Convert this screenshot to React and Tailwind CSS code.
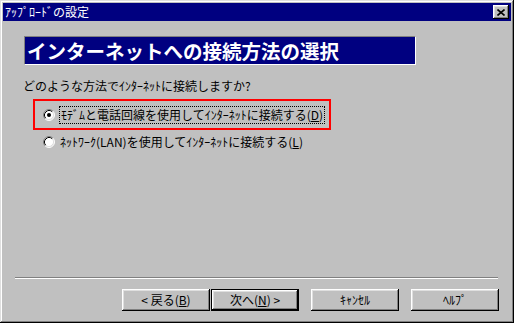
import React from 'react';

const font = { fontFamily: '"Noto Sans CJK JP", "Noto Sans", sans-serif' };

function Radio({ checked }) {
  return (
    <svg width="12" height="12" viewBox="0 0 12 12" className="shrink-0">
      <circle cx="6" cy="6" r="5" fill="#fff" />
      <path d="M2.11 9.89 A5.5 5.5 0 0 1 9.89 2.11" stroke="#808080" fill="none" />
      <path d="M9.89 2.11 A5.5 5.5 0 0 1 2.11 9.89" stroke="#fff" fill="none" />
      <path d="M2.82 9.18 A4.5 4.5 0 0 1 9.18 2.82" stroke="#000" fill="none" />
      <path d="M9.18 2.82 A4.5 4.5 0 0 1 2.82 9.18" stroke="#dfdfdf" fill="none" />
      {checked && <circle cx="6" cy="6" r="2" fill="#000" />}
    </svg>
  );
}

function Button({ children, isDefault }) {
  return (
    <button
      className={
        isDefault
          ? 'w-[88px] h-[22px] bg-[#c0c0c0] text-[12px] leading-4 text-black border border-black shadow-[inset_-1px_-1px_#000,inset_1px_1px_#fff,inset_-2px_-2px_#808080,inset_2px_2px_#dfdfdf] flex items-center justify-center'
          : 'w-[88px] h-[22px] bg-[#c0c0c0] text-[12px] leading-4 text-black shadow-[inset_-1px_-1px_#000,inset_1px_1px_#fff,inset_-2px_-2px_#808080,inset_2px_2px_#dfdfdf] flex items-center justify-center'
      }
    >
      {children}
    </button>
  );
}

export default function App() {
  return (
    <div
      className="w-[514px] h-[323px] bg-[#c0c0c0] p-[3px] flex flex-col shadow-[inset_-1px_-1px_#000,inset_1px_1px_#dfdfdf,inset_-2px_-2px_#808080,inset_2px_2px_#fff] text-black select-none"
      style={font}
    >
      {/* Title bar */}
      <div className="h-[18px] bg-[#000080] flex items-center justify-between pl-[2px] pr-[2px]">
        <span className="text-white text-[12px] leading-4">ｱｯﾌﾟﾛｰﾄﾞの設定</span>
        <div className="w-4 h-[14px] bg-[#c0c0c0] flex items-center justify-center shadow-[inset_-1px_-1px_#000,inset_1px_1px_#fff,inset_-2px_-2px_#808080,inset_2px_2px_#dfdfdf]">
          <svg width="8" height="7" viewBox="0 0 8 7">
            <path d="M0.5 0.5 L7.5 6.5 M7.5 0.5 L0.5 6.5" stroke="#000" strokeWidth="1.6" />
          </svg>
        </div>
      </div>

      {/* Content */}
      <div className="flex-1 flex flex-col">
        <div className="ml-[21px] mt-[15px] w-[392px] h-[29px] bg-[#000080] border-t border-l border-t-[#808080] border-l-[#808080] border-b border-r border-b-white border-r-white flex items-center pl-[2px]">
          <span className="text-white text-[19.5px] leading-6 font-bold">インターネットへの接続方法の選択</span>
        </div>

        <p className="ml-[20px] mt-[13px] text-[12px] leading-4">どのような方法でｲﾝﾀｰﾈｯﾄに接続しますか?</p>

        <div className="ml-[30px] mt-[5px] w-[298px] h-[31px] border-2 border-[#ff0000] flex items-center pl-[8px]">
          <Radio checked />
          <span className="ml-[4px] text-[12px] leading-4 border border-dotted border-black px-px">
            ﾓﾃﾞﾑと電話回線を使用してｲﾝﾀｰﾈｯﾄに接続する(<span className="underline">D</span>)
          </span>
        </div>

        <div className="ml-[40px] mt-[4px] h-4 flex items-center">
          <Radio />
          <span className="ml-[5px] text-[12px] leading-4">
            ﾈｯﾄﾜｰｸ(LAN)を使用してｲﾝﾀｰﾈｯﾄに接続する(<span className="underline">L</span>)
          </span>
        </div>

        <div className="flex-1" />

        <div className="ml-[12px] mr-[13px] border-t border-t-[#808080] border-b border-b-white" />

        <div className="mt-[10px] mb-[9px] pr-[12px] flex justify-end">
          <Button>&lt; 戻る(<span className="underline">B</span>)</Button>
          <div className="ml-px">
            <Button isDefault>次へ(<span className="underline">N</span>) &gt;</Button>
          </div>
          <div className="ml-[12px]">
            <Button>ｷｬﾝｾﾙ</Button>
          </div>
          <div className="ml-[12px]">
            <Button>ﾍﾙﾌﾟ</Button>
          </div>
        </div>
      </div>
    </div>
  );
}
